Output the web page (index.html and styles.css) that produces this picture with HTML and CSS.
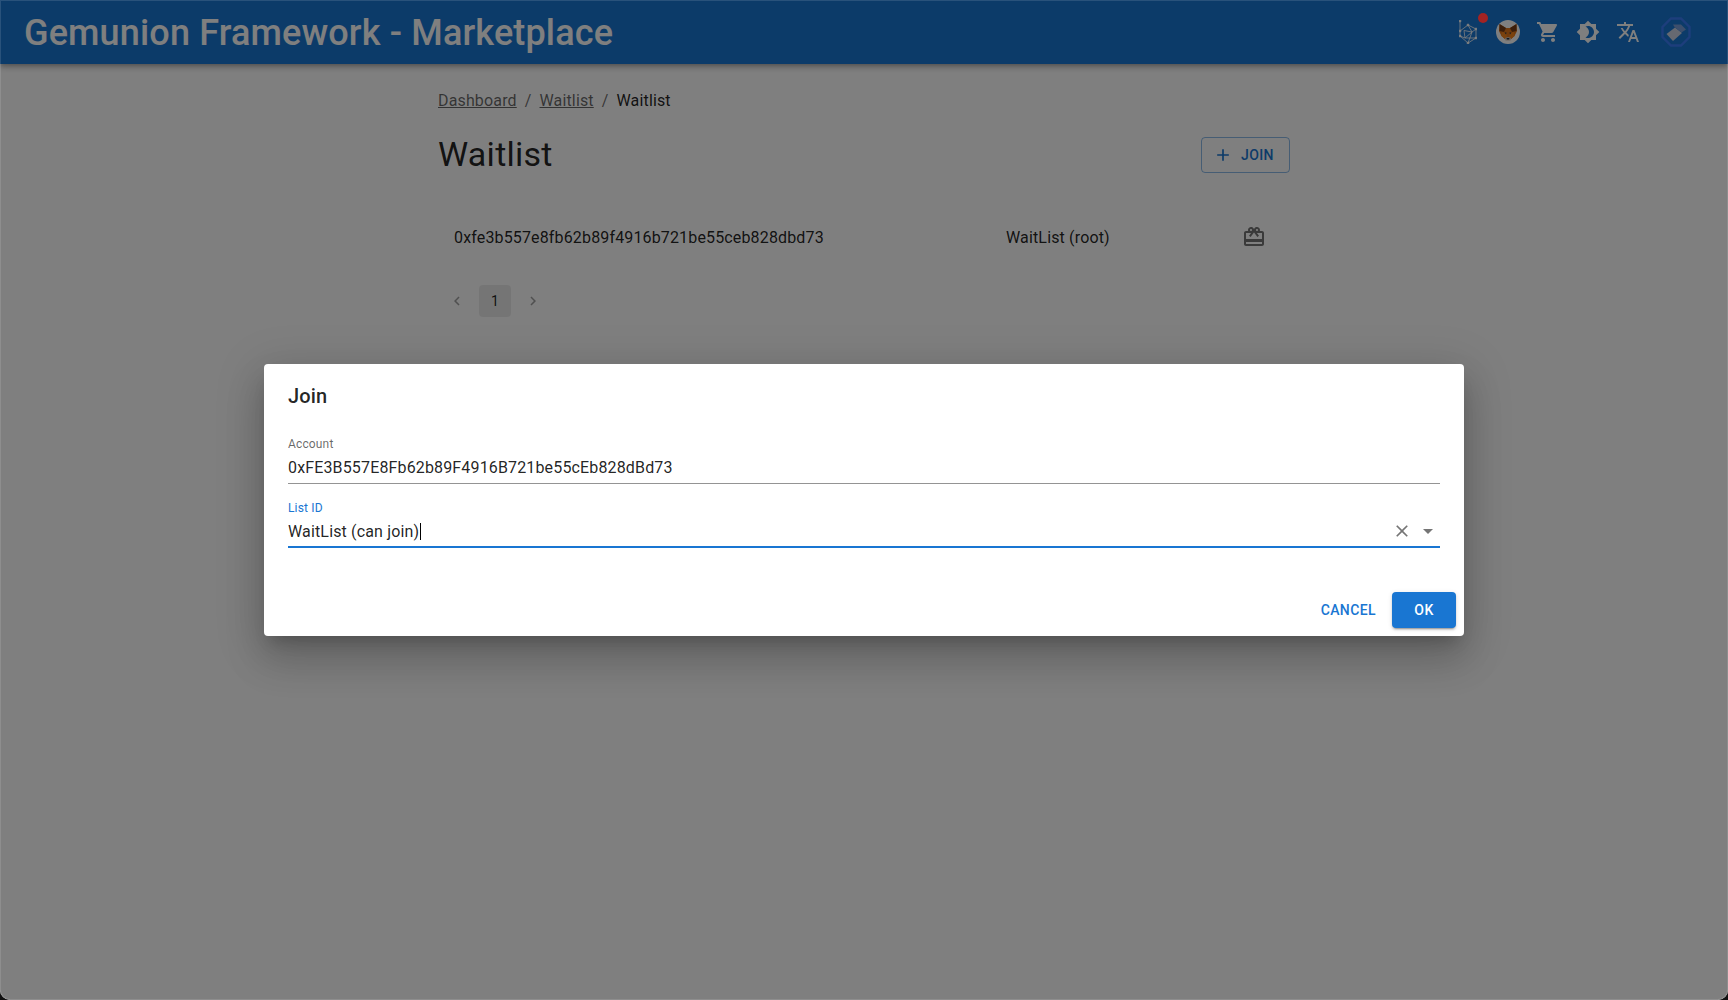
FILE: index.html
```html
<!DOCTYPE html>
<html lang="en">

<head>
    <meta charset="UTF-8">
    <meta name="viewport" content="width=device-width, initial-scale=1.0">
    <title>Gemunion Framework - Marketplace</title>
    <link rel="stylesheet" href="styles.css">
</head>

<body>
    <header class="topbar">
        <div class="brand">Gemunion Framework - Marketplace</div>
        <div class="topbar-icons">
            <span class="icon-btn net-btn">
                <svg width="18" height="24" viewBox="0 0 18 24" fill="none" stroke="#fff" stroke-width="0.8">
                    <path d="M1 1V16L9 23L17 18V9L9 5L1 11"/>
                    <path d="M9 5L13 12L9 23M17 9L13 12L5 10.500M5 10.500L6 18L13 12M6 18L17 18M1 16L6 18"/>
                    <circle cx="1" cy="1" r="1" fill="#fff"/>
                    <circle cx="1" cy="11" r="1" fill="#fff"/>
                    <circle cx="1" cy="16" r="1" fill="#fff"/>
                    <circle cx="9" cy="23" r="1" fill="#fff"/>
                    <circle cx="17" cy="18" r="1" fill="#fff"/>
                    <circle cx="17" cy="9" r="1" fill="#fff"/>
                    <circle cx="9" cy="5" r="1" fill="#fff"/>
                </svg>
                <span class="red-dot"></span>
            </span>
            <span class="icon-btn">
                <svg width="24" height="24" viewBox="0 0 24 24">
                    <circle cx="12" cy="12" r="12" fill="#fff"/>
                    <path d="M3.500 4L10 8H14L20.500 4L21 11L18.500 16L15 19H9L5.500 16L3 11Z" fill="#e2761b"/>
                    <path d="M3.500 4L10 8L8 12L3.500 11Z" fill="#763d16"/>
                    <path d="M20.500 4L14 8L16 12L20.500 11Z" fill="#763d16"/>
                    <path d="M6 12L10 13L11 17L9 19L5.500 16Z" fill="#f6851b"/>
                    <path d="M18 12L14 13L13 17L15 19L18.500 16Z" fill="#f6851b"/>
                    <path d="M9 18L12 17L15 18L14.500 20.500H9.500Z" fill="#d7c1b3"/>
                    <path d="M10.500 18H13.500L13 19.500H11Z" fill="#233447"/>
                    <path d="M8.500 12.500L10.500 12.500L10 14.500Z M15.500 12.500L13.500 12.500L14 14.500Z" fill="#233447"/>
                </svg>
            </span>
            <span class="icon-btn">
                <svg width="24" height="24" viewBox="0 0 24 24" fill="#fff">
                    <path d="M7 18c-1.100 0-1.990.9-1.990 2S5.900 22 7 22s2-.9 2-2-.9-2-2-2zM1 2v2h2l3.600 7.590-1.350 2.450c-.16.28-.25.61-.25.96 0 1.100.9 2 2 2h12v-2H7.420c-.14 0-.25-.11-.25-.25l.03-.12.9-1.630h7.450c.75 0 1.410-.41 1.750-1.030l3.580-6.490c.08-.14.12-.31.12-.48 0-.55-.45-1-1-1H5.210l-.94-2H1zm16 16c-1.100 0-1.990.9-1.990 2s.89 2 1.990 2 2-.9 2-2-.9-2-2-2z"/>
                </svg>
            </span>
            <span class="icon-btn">
                <svg width="24" height="24" viewBox="0 0 24 24" fill="#fff">
                    <path d="M20 8.690V4h-4.690L12 .690 8.690 4H4v4.690L.690 12 4 15.310V20h4.690L12 23.310 15.310 20H20v-4.690L23.310 12 20 8.690zM12 18c-.89 0-1.740-.2-2.500-.55C11.560 16.500 13 14.420 13 12s-1.440-4.500-3.500-5.450C10.260 6.200 11.110 6 12 6c3.310 0 6 2.690 6 6s-2.690 6-6 6z"/>
                </svg>
            </span>
            <span class="icon-btn">
                <svg width="24" height="24" viewBox="0 0 24 24" fill="#fff">
                    <path d="M12.870 15.070l-2.540-2.510.03-.03c1.740-1.940 2.980-4.170 3.710-6.530H17V4h-7V2H8v2H1v1.990h11.170C11.500 7.920 10.440 9.750 9 11.350 8.070 10.320 7.300 9.190 6.690 8h-2c.73 1.630 1.730 3.170 2.980 4.560l-5.090 5.020L4 19l5-5 3.110 3.110.76-2.040zM18.500 10h-2L12 22h2l1.120-3h4.750L21 22h2l-4.500-12zm-2.620 7l1.620-4.330L19.120 17h-3.240z"/>
                </svg>
            </span>
            <span class="wallet-logo">
                <svg width="30" height="30" viewBox="0 0 30 30">
                    <path d="M10 1.500H20L28.500 10V20L20 28.500H10L1.500 20V10Z" fill="none" stroke="#3a7cf8" stroke-width="2.400"/>
                    <path d="M5.500 17L14 10.500L21 16L12 24Z" fill="#ccd3e2"/>
                    <path d="M12 7.500H20L25 12.500L20.500 15.500L13.500 10Z" fill="#7a9ed8"/>
                </svg>
            </span>
        </div>
    </header>

    <main class="page">
        <nav class="crumbs">
            <a href="#">Dashboard</a>
            <span class="sep">/</span>
            <a href="#">Waitlist</a>
            <span class="sep">/</span>
            <span class="crumb-current">Waitlist</span>
        </nav>

        <div class="title-row">
            <h1>Waitlist</h1>
            <button class="btn-outline">
                <svg width="20" height="20" viewBox="0 0 24 24" fill="#1976d2"><path d="M19 13h-6v6h-2v-6H5v-2h6V5h2v6h6v2z"/></svg>
                JOIN
            </button>
        </div>

        <div class="list-row">
            <span class="addr">0xfe3b557e8fb62b89f4916b721be55ceb828dbd73</span>
            <span class="list-name">WaitList (root)</span>
            <svg class="row-icon" width="24" height="24" viewBox="0 0 24 24" fill="#757575">
                <path d="M20 6h-2.180c.11-.31.18-.65.18-1 0-1.660-1.340-3-3-3-1.050 0-1.960.54-2.500 1.350l-.5.670-.5-.68C10.960 2.540 10.050 2 9 2 7.340 2 6 3.340 6 5c0 .35.07.69.18 1H4c-1.110 0-1.990.89-1.990 2L2 19c0 1.110.89 2 2 2h16c1.110 0 2-.89 2-2V8c0-1.110-.89-2-2-2zm-5-2c.55 0 1 .45 1 1s-.45 1-1 1-1-.45-1-1 .45-1 1-1zM9 4c.55 0 1 .45 1 1s-.45 1-1 1-1-.45-1-1 .45-1 1-1zm11 15H4v-2h16v2zm0-5H4V8h5.080L7 10.830 8.620 12 11 8.760l1-1.360 1 1.360L15.380 12 17 10.830 14.920 8H20v6z"/>
            </svg>
        </div>

        <div class="pager">
            <svg width="18" height="18" viewBox="0 0 24 24" fill="#a0a0a0"><path d="M15.410 7.410 14 6l-6 6 6 6 1.410-1.410L10.830 12z"/></svg>
            <span class="page-num">1</span>
            <svg width="18" height="18" viewBox="0 0 24 24" fill="#a0a0a0"><path d="M10 6 8.590 7.410 13.170 12l-4.580 4.590L10 18l6-6z"/></svg>
        </div>
    </main>

    <div class="scrim">
        <div class="dialog">
            <h2>Join</h2>
            <div class="dialog-body">
                <div class="field">
                    <label>Account</label>
                    <div class="field-value">0xFE3B557E8Fb62b89F4916B721be55cEb828dBd73</div>
                </div>
                <div class="field field-focus">
                    <label>List ID</label>
                    <div class="field-value">
                        <span>WaitList (can join)<span class="caret"></span></span>
                        <span class="field-icons">
                            <svg width="20" height="20" viewBox="0 0 24 24" fill="#757575"><path d="M19 6.410 17.590 5 12 10.590 6.410 5 5 6.410 10.590 12 5 17.590 6.410 19 12 13.410 17.590 19 19 17.590 13.410 12z"/></svg>
                            <svg width="24" height="24" viewBox="0 0 24 24" fill="#757575"><path d="M7 10l5 5 5-5z"/></svg>
                        </span>
                    </div>
                </div>
            </div>
            <div class="dialog-actions">
                <button class="btn-text">CANCEL</button>
                <button class="btn-primary">OK</button>
            </div>
        </div>
    </div>
</body>

</html>
```

FILE: styles.css
```css
* {
    box-sizing: border-box;
}

html {
    height: 100%;
    background-color: #111;
    overflow: hidden;
}

body {
    position: relative;
    height: 100%;
    margin: 0;
    background-color: #fff;
    color: rgba(0, 0, 0, 0.87);
    font-family: Roboto, "Liberation Sans", sans-serif;
    font-size: 16px;
    letter-spacing: 0.15px;
    border-radius: 0 0 10px 10px;
    overflow: hidden;
}

.topbar {
    display: flex;
    align-items: center;
    justify-content: space-between;
    height: 64px;
    padding: 0 24px;
    background-color: #1976d2;
    color: #fff;
    box-shadow: 0 2px 4px -1px rgba(0, 0, 0, 0.2), 0 4px 5px 0 rgba(0, 0, 0, 0.14), 0 1px 10px 0 rgba(0, 0, 0, 0.12);
}

.brand {
    padding-top: 2px;
    font-size: 36px;
    font-weight: 500;
    letter-spacing: 0.15px;
}

.topbar-icons {
    display: flex;
    align-items: center;
}

.icon-btn {
    display: flex;
    align-items: center;
    justify-content: center;
    position: relative;
    width: 40px;
    height: 40px;
}

/* sits over the scrim, it stays bright in the screenshot */
.red-dot {
    position: absolute;
    z-index: 2;
    top: 1px;
    right: 0;
    width: 10px;
    height: 10px;
    border-radius: 50%;
    background-color: #a32323;
}

.wallet-logo {
    display: flex;
    margin-left: 13px;
    margin-right: 13px;
}

.page {
    width: 852px;
    margin-left: 438px;
    padding-top: 24px;
}

.crumbs {
    display: flex;
    align-items: center;
    height: 24px;
    color: rgba(0, 0, 0, 0.6);
}

.crumbs a {
    color: rgba(0, 0, 0, 0.6);
}

.sep {
    margin: 0 8px;
}

.crumb-current {
    color: rgba(0, 0, 0, 0.87);
}

.title-row {
    display: flex;
    align-items: flex-start;
    justify-content: space-between;
    margin-top: 23px;
}

h1 {
    margin: 0;
    font-size: 34px;
    font-weight: 400;
    line-height: 39px;
    letter-spacing: 0.25px;
}

.btn-outline {
    display: flex;
    align-items: center;
    gap: 8px;
    height: 36px;
    width: 89px;
    margin-top: 2px;
    padding: 0 15px 0 11px;
    border: 1px solid rgba(25, 118, 210, 0.5);
    border-radius: 4px;
    background: none;
    color: #1976d2;
    font-family: inherit;
    font-size: 14px;
    font-weight: 500;
    letter-spacing: 0.4px;
}

.list-row {
    display: flex;
    align-items: center;
    height: 48px;
    margin-top: 39px;
    padding-left: 16px;
}

.addr {
    width: 552px;
}

.list-name {
    width: 236px;
}

.pager {
    display: flex;
    align-items: center;
    margin-top: 24px;
    padding-left: 12px;
    gap: 13px;
}

.pager svg {
    margin-left: -2px;
}

.page-num {
    display: flex;
    align-items: center;
    justify-content: center;
    width: 32px;
    height: 32px;
    margin-right: 2px;
    border-radius: 4px;
    background-color: rgba(0, 0, 0, 0.08);
    font-size: 14px;
}

.scrim {
    position: absolute;
    z-index: 1;
    top: 0;
    left: 0;
    right: 0;
    bottom: 0;
    display: flex;
    align-items: center;
    justify-content: center;
    background-color: rgba(0, 0, 0, 0.5);
    box-shadow: inset 0 0 0 1px rgba(255, 255, 255, 0.12);
    border-radius: 0 0 10px 10px;
}

.dialog {
    width: 1200px;
    height: 272px;
    border-radius: 4px;
    background-color: #fff;
    box-shadow: 0 11px 15px -7px rgba(0, 0, 0, 0.2), 0 24px 38px 3px rgba(0, 0, 0, 0.14), 0 9px 46px 8px rgba(0, 0, 0, 0.12);
}

.dialog h2 {
    margin: 0;
    padding: 16px 24px;
    font-size: 20px;
    font-weight: 500;
    line-height: 32px;
    letter-spacing: 0.15px;
}

.dialog-body {
    padding: 0 24px;
    height: 164px;
}

.field {
    margin-bottom: 8px;
    height: 56px;
    padding-top: 9px;
}

.field label {
    display: block;
    height: 15px;
    color: rgba(0, 0, 0, 0.6);
    font-size: 12px;
    line-height: 14px;
}

.field-value {
    display: flex;
    align-items: center;
    justify-content: space-between;
    height: 32px;
    border-bottom: 1px solid rgba(0, 0, 0, 0.42);
}

.field-focus label {
    color: #1976d2;
}

.field-focus .field-value {
    border-bottom: 2px solid #1976d2;
}

.caret {
    display: inline-block;
    width: 1px;
    height: 17px;
    margin-left: 1px;
    vertical-align: -3px;
    background-color: #000;
}

.field-icons {
    display: flex;
    align-items: center;
    gap: 4px;
}

.dialog-actions {
    display: flex;
    justify-content: flex-end;
    align-items: center;
    padding: 0 8px;
    gap: 8px;
}

.btn-text,
.btn-primary {
    height: 36px;
    border: none;
    border-radius: 4px;
    font-family: inherit;
    font-size: 14px;
    font-weight: 500;
    letter-spacing: 0.4px;
}

.btn-text {
    padding: 0 8px;
    background: none;
    color: #1976d2;
}

.btn-primary {
    width: 64px;
    background-color: #1976d2;
    color: #fff;
    box-shadow: 0 3px 1px -2px rgba(0, 0, 0, 0.2), 0 2px 2px 0 rgba(0, 0, 0, 0.14), 0 1px 5px 0 rgba(0, 0, 0, 0.12);
}
```
